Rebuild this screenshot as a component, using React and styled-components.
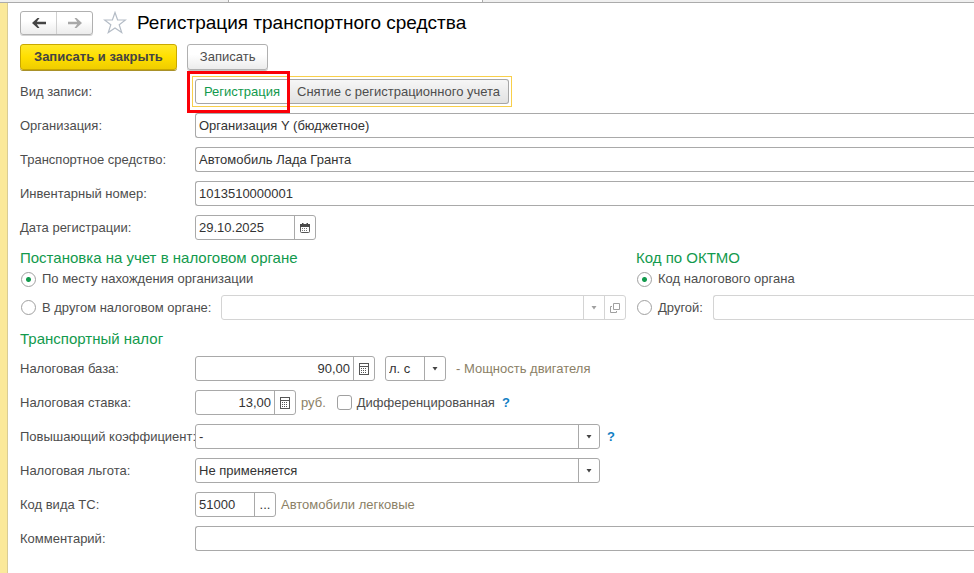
import { useState } from "react"
import styled, { createGlobalStyle, css } from "styled-components"

const GlobalStyle = createGlobalStyle`
  * {
    box-sizing: border-box;
  }

  body {
    margin: 0;
    background: #fff;
    color: #4d4d4d;
    font: 13px/16px "Liberation Sans", Arial, sans-serif;
    overflow-x: hidden;
  }

  button,
  input,
  select {
    font: inherit;
    color: inherit;
  }
`

function ArrowIcon({ flip, color }) {
  return (
    <svg width="16" height="12" viewBox="0 0 16 12">
      <path
        d="M1 6 6.500 1H8.500L5.800 4.800H15V7.200H5.800L8.500 11H6.500Z"
        fill={color}
        transform={flip ? "matrix(-1 0 0 1 16 0)" : undefined}
      />
    </svg>
  )
}

function StarIcon() {
  return (
    <svg width="24" height="24" viewBox="0 0 24 24">
      <path
        d="M12 1.500 14.600 9H22.500L16.200 13.800 18.700 21.500 12 17 5.300 21.500 7.800 13.800 1.500 9H9.400Z"
        fill="#fff"
        stroke="#b4bcc6"
        strokeWidth="1.2"
      />
    </svg>
  )
}

function CalendarIcon() {
  return (
    <svg width="10" height="10" viewBox="0 0 10 10">
      <rect x="0.5" y="1.5" width="9" height="8" rx="1" fill="#fff" stroke="#555" />
      <path d="M0 1h10v3H0zM2 0h1.500v2H2zM6.500 0H8v2H6.500z" fill="#4a4a4a" />
      <path d="M2 5.500h6M2 7.500h6" stroke="#777" strokeDasharray="1 1" />
    </svg>
  )
}

function CalculatorIcon() {
  return (
    <svg width="10" height="12" viewBox="0 0 10 12">
      <rect x="0.5" y="0.5" width="9" height="11" fill="#fff" stroke="#555" />
      <path d="M1 3.500h8" stroke="#555" />
      <path d="M2 5.500h6M2 7.500h6M2 9.500h6" stroke="#555" strokeDasharray="1 1" />
    </svg>
  )
}

function OpenIcon() {
  return (
    <svg width="10" height="10" viewBox="0 0 10 10" fill="none" stroke="#a0a0a0">
      <path d="M3.500 0.500h6v6h-6zM2 3.500H0.500v6h6V8" />
    </svg>
  )
}

function CaretIcon({ color = "#444" }) {
  return (
    <svg width="6" height="4" viewBox="0 0 6 4">
      <path d="M0.500 0h5L3 3.500z" fill={color} />
    </svg>
  )
}

function TextRow({ id, label, defaultValue }) {
  return (
    <Row>
      <Label htmlFor={id}>{label}</Label>
      <Field $open>
        <Input id={id} defaultValue={defaultValue} />
      </Field>
    </Row>
  )
}

function Dropdown({ id, width, options, ...props }) {
  return (
    <SelectField $width={width}>
      <Select id={id} {...props}>
        {options.map((option) => (
          <option key={option}>{option}</option>
        ))}
      </Select>
      <Caret>
        <CaretIcon />
      </Caret>
    </SelectField>
  )
}

export default function App() {
  const [kind, setKind] = useState("registration")
  const [taxOffice, setTaxOffice] = useState("own")
  const [oktmo, setOktmo] = useState("office")

  return (
    <>
      <GlobalStyle />
      <TabStrip>
        <ActiveTab />
      </TabStrip>
      <Page>
        <TitleBar>
          <NavButtons>
            <NavButton type="button" aria-label="Назад">
              <ArrowIcon color="#444" />
            </NavButton>
            <NavButton type="button" aria-label="Вперед">
              <ArrowIcon flip color="#a8a8a8" />
            </NavButton>
          </NavButtons>
          <StarButton type="button" aria-label="В избранное">
            <StarIcon />
          </StarButton>
          <Title>Регистрация транспортного средства</Title>
        </TitleBar>

        <Toolbar>
          <PrimaryButton type="button">Записать и закрыть</PrimaryButton>
          <Button type="button">Записать</Button>
        </Toolbar>

        <Rows>
          <Row>
            <Label as="span" id="kind-label">
              Вид записи:
            </Label>
            <Toggle role="group" aria-labelledby="kind-label">
              <ToggleButton
                type="button"
                $active={kind === "registration"}
                aria-pressed={kind === "registration"}
                onClick={() => setKind("registration")}
              >
                Регистрация
              </ToggleButton>
              <ToggleButton
                type="button"
                $active={kind === "removal"}
                aria-pressed={kind === "removal"}
                onClick={() => setKind("removal")}
              >
                Снятие с регистрационного учета
              </ToggleButton>
              <Highlight />
            </Toggle>
          </Row>
          <TextRow id="org" label="Организация:" defaultValue="Организация Y (бюджетное)" />
          <TextRow
            id="vehicle"
            label="Транспортное средство:"
            defaultValue="Автомобиль Лада Гранта"
          />
          <TextRow id="number" label="Инвентарный номер:" defaultValue="1013510000001" />
          <Row>
            <Label htmlFor="date">Дата регистрации:</Label>
            <Field $width={121}>
              <Input id="date" defaultValue="29.10.2025" />
              <FieldButton type="button" aria-label="Выбрать дату">
                <CalendarIcon />
              </FieldButton>
            </Field>
          </Row>
        </Rows>

        <Groups>
          <Group>
            <GroupTitle>Постановка на учет в налоговом органе</GroupTitle>
            <RadioLine>
              <Radio
                id="office-own"
                name="office"
                checked={taxOffice === "own"}
                onChange={() => setTaxOffice("own")}
              />
              <label htmlFor="office-own">По месту нахождения организации</label>
            </RadioLine>
            <RadioLine $tall>
              <Radio
                id="office-other"
                name="office"
                checked={taxOffice === "other"}
                onChange={() => setTaxOffice("other")}
              />
              <label htmlFor="office-other">В другом налоговом органе:</label>
              <Field $disabled $grow>
                <Input aria-label="Налоговый орган" disabled />
                <FieldButton type="button" aria-label="Показать список" disabled>
                  <CaretIcon color="#a0a0a0" />
                </FieldButton>
                <FieldButton type="button" aria-label="Открыть" disabled>
                  <OpenIcon />
                </FieldButton>
              </Field>
            </RadioLine>
          </Group>
          <Group>
            <GroupTitle>Код по ОКТМО</GroupTitle>
            <RadioLine>
              <Radio
                id="oktmo-office"
                name="oktmo"
                checked={oktmo === "office"}
                onChange={() => setOktmo("office")}
              />
              <label htmlFor="oktmo-office">Код налогового органа</label>
            </RadioLine>
            <RadioLine $tall>
              <Radio
                id="oktmo-other"
                name="oktmo"
                checked={oktmo === "other"}
                onChange={() => setOktmo("other")}
              />
              <label htmlFor="oktmo-other">Другой:</label>
              <Field $disabled $open $grow>
                <Input aria-label="Код по ОКТМО" disabled />
              </Field>
            </RadioLine>
          </Group>
        </Groups>

        <TaxTitle>Транспортный налог</TaxTitle>
        <Rows>
          <Row>
            <Label htmlFor="base">Налоговая база:</Label>
            <Field $width={180}>
              <Input id="base" $right defaultValue="90,00" />
              <FieldButton type="button" aria-label="Калькулятор">
                <CalculatorIcon />
              </FieldButton>
            </Field>
            <Unit>
              <Dropdown width={61} options={["л. с", "кВт"]} aria-label="Единица измерения" />
              <Note>- Мощность двигателя</Note>
            </Unit>
          </Row>
          <Row>
            <Label htmlFor="rate">Налоговая ставка:</Label>
            <Field $width={101}>
              <Input id="rate" $right defaultValue="13,00" />
              <FieldButton type="button" aria-label="Калькулятор">
                <CalculatorIcon />
              </FieldButton>
            </Field>
            <SideNote>руб.</SideNote>
            <Checkbox id="diff" />
            <label htmlFor="diff">Дифференцированная</label>
            <Help href="#rate-help">?</Help>
          </Row>
          <Row>
            <Label htmlFor="factor">Повышающий коэффициент:</Label>
            <Dropdown id="factor" width={405} options={["-"]} />
            <Help href="#factor-help">?</Help>
          </Row>
          <Row>
            <Label htmlFor="benefit">Налоговая льгота:</Label>
            <Dropdown id="benefit" width={405} options={["Не применяется"]} />
          </Row>
          <Row>
            <Label htmlFor="code">Код вида ТС:</Label>
            <Field $width={81}>
              <Input id="code" defaultValue="51000" />
              <FieldButton type="button" aria-label="Выбрать код">
                ...
              </FieldButton>
            </Field>
            <SideNote>Автомобили легковые</SideNote>
          </Row>
          <TextRow id="comment" label="Комментарий:" />
        </Rows>
      </Page>
    </>
  )
}

const TabStrip = styled.div`
  display: flex;
  height: 3px;
  padding-left: 228px;
  background: #f0f0f0;
  border-bottom: 1px solid #ababab;
`

const ActiveTab = styled.div`
  width: 255px;
  background: #fff;
  border: solid #ababab;
  border-width: 0 1px;
`

const Page = styled.main`
  min-height: calc(100vh - 3px);
  padding: 8px 0 8px 13px;
  border-left: 7px solid #fbe99a;
  box-shadow: inset 1px 0 #d9cc95;
`

const TitleBar = styled.header`
  display: flex;
  align-items: center;
`

const raised = css`
  border: 1px solid #b0b0b0;
  border-radius: 3px;
  background: linear-gradient(#fff 40%, #ececec);
`

const NavButtons = styled.div`
  ${raised}
  display: flex;
  width: 73px;
  height: 24px;
  box-shadow: 0 1px #d4d4d4;
`

const NavButton = styled.button`
  display: flex;
  flex: 1;
  align-items: center;
  justify-content: center;
  padding: 0;
  border: none;
  background: none;

  & + & {
    border-left: 1px solid #d0d0d0;
  }
`

const StarButton = styled.button`
  display: flex;
  margin: 0 10px;
  padding: 0;
  border: none;
  background: none;
`

const Title = styled.h1`
  margin: 0;
  color: #000;
  font-size: 19px;
  font-weight: 400;
  line-height: 24px;
`

const Toolbar = styled.div`
  display: flex;
  gap: 10px;
  margin: 9px 0;
`

const Button = styled.button`
  ${raised}
  height: 26px;
  padding: 0 12px;
  box-shadow: 0 1px #c4c4c4;
`

const PrimaryButton = styled(Button)`
  padding: 0 13px;
  border-color: #c9a800;
  background: linear-gradient(#ffe82a, #ffdf00 50%, #efcd00);
  box-shadow: 0 1px #a99129;
  color: #444;
  font-weight: 700;
`

const Rows = styled.div`
  display: flex;
  flex-direction: column;
  gap: 9px;
`

const Row = styled.div`
  display: flex;
  align-items: center;
  height: 25px;
`

const Label = styled.label`
  flex: 0 0 175px;
  min-width: 0;
  white-space: nowrap;
`

const Toggle = styled.div`
  position: relative;
  display: flex;
  height: 31px;
  margin-left: -3px;
  padding: 2px;
  border: 1px solid #f8cf4a;
`

const ToggleButton = styled.button`
  padding: 0 8px;
  border: 1px solid #a6a6a6;
  border-radius: ${(p) => (p.$active ? "3px 0 0 3px" : "0 3px 3px 0")};
  background: ${(p) => (p.$active ? "#fff" : "linear-gradient(#f6f6f6, #e2e2e2)")};
  color: ${(p) => (p.$active ? "#129a4d" : "#4d4d4d")};

  & + & {
    border-left: none;
  }
`

/* red marker frame over the active option */
const Highlight = styled.div`
  position: absolute;
  top: -6px;
  left: -6px;
  width: 103px;
  height: 42px;
  border: 3px solid #fb0007;
  pointer-events: none;
`

const fieldFrame = css`
  height: 25px;
  border: 1px solid #a9a9a9;
  border-radius: 3px;
  background: #fff;
  color: #333;
`

const Field = styled.div`
  ${fieldFrame}
  display: flex;
  flex: ${(p) => (p.$width ? `0 0 ${p.$width}px` : "1")};
  overflow: hidden;
  min-width: 0;
  border-color: ${(p) => (p.$disabled ? "#d4d4d4" : "#a9a9a9")};
  margin-left: ${(p) => (p.$grow ? "10px" : 0)};
  ${(p) =>
    p.$open &&
    css`
      border-right: none;
      border-radius: 3px 0 0 3px;
    `}
`

const Input = styled.input`
  flex: 1;
  min-width: 0;
  padding: 0 3px;
  border: none;
  outline: none;
  background: none;
  text-align: ${(p) => (p.$right ? "right" : "left")};
`

const FieldButton = styled.button`
  display: flex;
  flex: 0 0 21px;
  align-items: center;
  justify-content: center;
  padding: 0;
  border: none;
  border-left: 1px solid ${(p) => (p.disabled ? "#d4d4d4" : "#a9a9a9")};
  background: none;
`

const SelectField = styled.div`
  ${fieldFrame}
  display: grid;
  width: ${(p) => p.$width}px;
`

const Select = styled.select`
  grid-area: 1 / 1;
  min-width: 0;
  padding: 0 24px 0 3px;
  border: none;
  outline: none;
  appearance: none;
  background: none;
`

const Caret = styled.span`
  display: flex;
  grid-area: 1 / 1;
  align-items: center;
  justify-content: center;
  justify-self: end;
  width: 21px;
  border-left: 1px solid #a9a9a9;
  pointer-events: none;
`

const Groups = styled.div`
  display: grid;
  grid-template-columns: 606px 1fr;
  gap: 10px;
  margin-top: 8px;
`

const Group = styled.section`
  min-width: 0;
`

const GroupTitle = styled.h2`
  margin: 0;
  color: #129a4d;
  font-size: 15px;
  font-weight: 400;
  line-height: 20px;
`

const TaxTitle = styled(GroupTitle)`
  margin: 9px 0 7px;
`

const RadioLine = styled.div`
  display: flex;
  align-items: center;
  height: ${(p) => (p.$tall ? 25 : 22)}px;
  margin-top: ${(p) => (p.$tall ? 5 : 0)}px;
  white-space: nowrap;
`

const Radio = styled.input.attrs({ type: "radio" })`
  width: 15px;
  height: 15px;
  margin: 0 6px 0 1px;
  border: 1px solid #a0a0a0;
  border-radius: 50%;
  appearance: none;

  &:checked {
    background: radial-gradient(circle, #129a4d 2px, #fff 3px);
  }
`

const Checkbox = styled.input.attrs({ type: "checkbox" })`
  width: 15px;
  height: 15px;
  margin: 0 5px 0 11px;
  border: 1px solid #a0a0a0;
  border-radius: 3px;
  appearance: none;

  &:checked {
    background: #129a4d;
  }
`

const Unit = styled.div`
  display: flex;
  align-items: center;
  gap: 10px;
  margin-left: 10px;
`

const Note = styled.span`
  color: #8b7f66;
`

const SideNote = styled(Note)`
  margin-left: 5px;
`

const Help = styled.a`
  margin-left: 7px;
  color: #1280c4;
  font-weight: 700;
  text-decoration: none;
`
